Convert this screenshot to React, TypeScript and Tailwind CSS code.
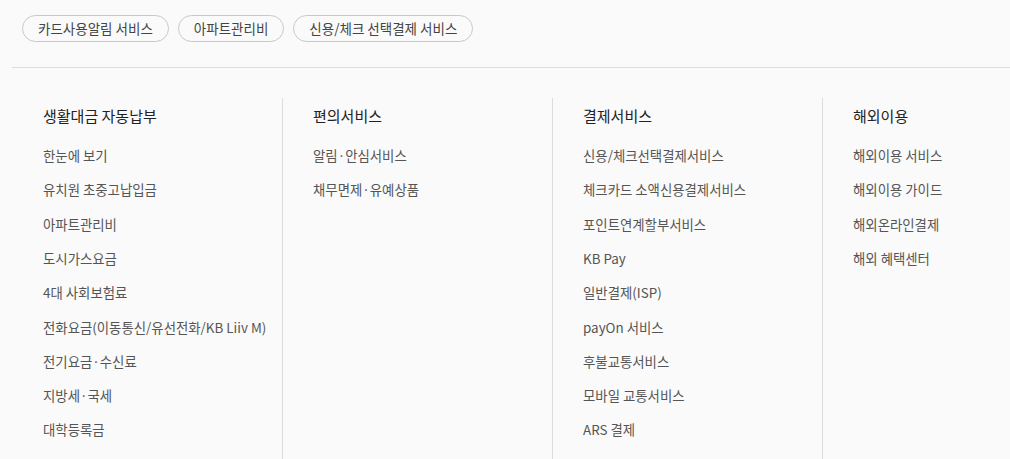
import React from "react";

const pills = ["카드사용알림 서비스", "아파트관리비", "신용/체크 선택결제 서비스"];

const columns: { title: string; items: string[] }[] = [
  {
    title: "생활대금 자동납부",
    items: [
      "한눈에 보기",
      "유치원 초중고납입금",
      "아파트관리비",
      "도시가스요금",
      "4대 사회보험료",
      "전화요금(이동통신/유선전화/KB Liiv M)",
      "전기요금·수신료",
      "지방세·국세",
      "대학등록금",
    ],
  },
  { title: "편의서비스", items: ["알림·안심서비스", "채무면제·유예상품"] },
  {
    title: "결제서비스",
    items: [
      "신용/체크선택결제서비스",
      "체크카드 소액신용결제서비스",
      "포인트연계할부서비스",
      "KB Pay",
      "일반결제(ISP)",
      "payOn 서비스",
      "후불교통서비스",
      "모바일 교통서비스",
      "ARS 결제",
    ],
  },
  {
    title: "해외이용",
    items: ["해외이용 서비스", "해외이용 가이드", "해외온라인결제", "해외 혜택센터"],
  },
];

export default function App() {
  return (
    <div
      className="w-full h-[459px] overflow-hidden bg-[#fafafa]"
      style={{ fontFamily: '"Noto Sans CJK KR", "Noto Sans", sans-serif' }}
    >
      <div className="flex gap-[9px] pl-[22px] pt-[15px]">
        {pills.map((p) => (
          <div
            key={p}
            className="h-[27px] px-[15px] flex items-center rounded-full border border-[#c8c8c8] text-[13.5px] text-[#444] leading-none"
          >
            {p}
          </div>
        ))}
      </div>
      <div className="ml-[12px] mt-[25px] border-t border-[#dddddd]" />
      <div className="ml-[12px] pt-[30px] flex">
        {columns.map((c, i) => (
          <div
            key={c.title}
            className={
              "w-[270px] shrink-0 h-[400px] pl-[30px] " +
              (i > 0 ? "border-l border-[#dddddd]" : "border-l border-transparent")
            }
          >
            <div className="mt-[8px] h-[20px] mb-[12px] flex items-center text-[15px] text-[#222]">
              {c.title}
            </div>
            {c.items.map((it) => (
              <div key={it} className="h-[34.3px] flex items-center text-[13.4px] text-[#555]">
                {it}
              </div>
            ))}
          </div>
        ))}
      </div>
    </div>
  );
}
